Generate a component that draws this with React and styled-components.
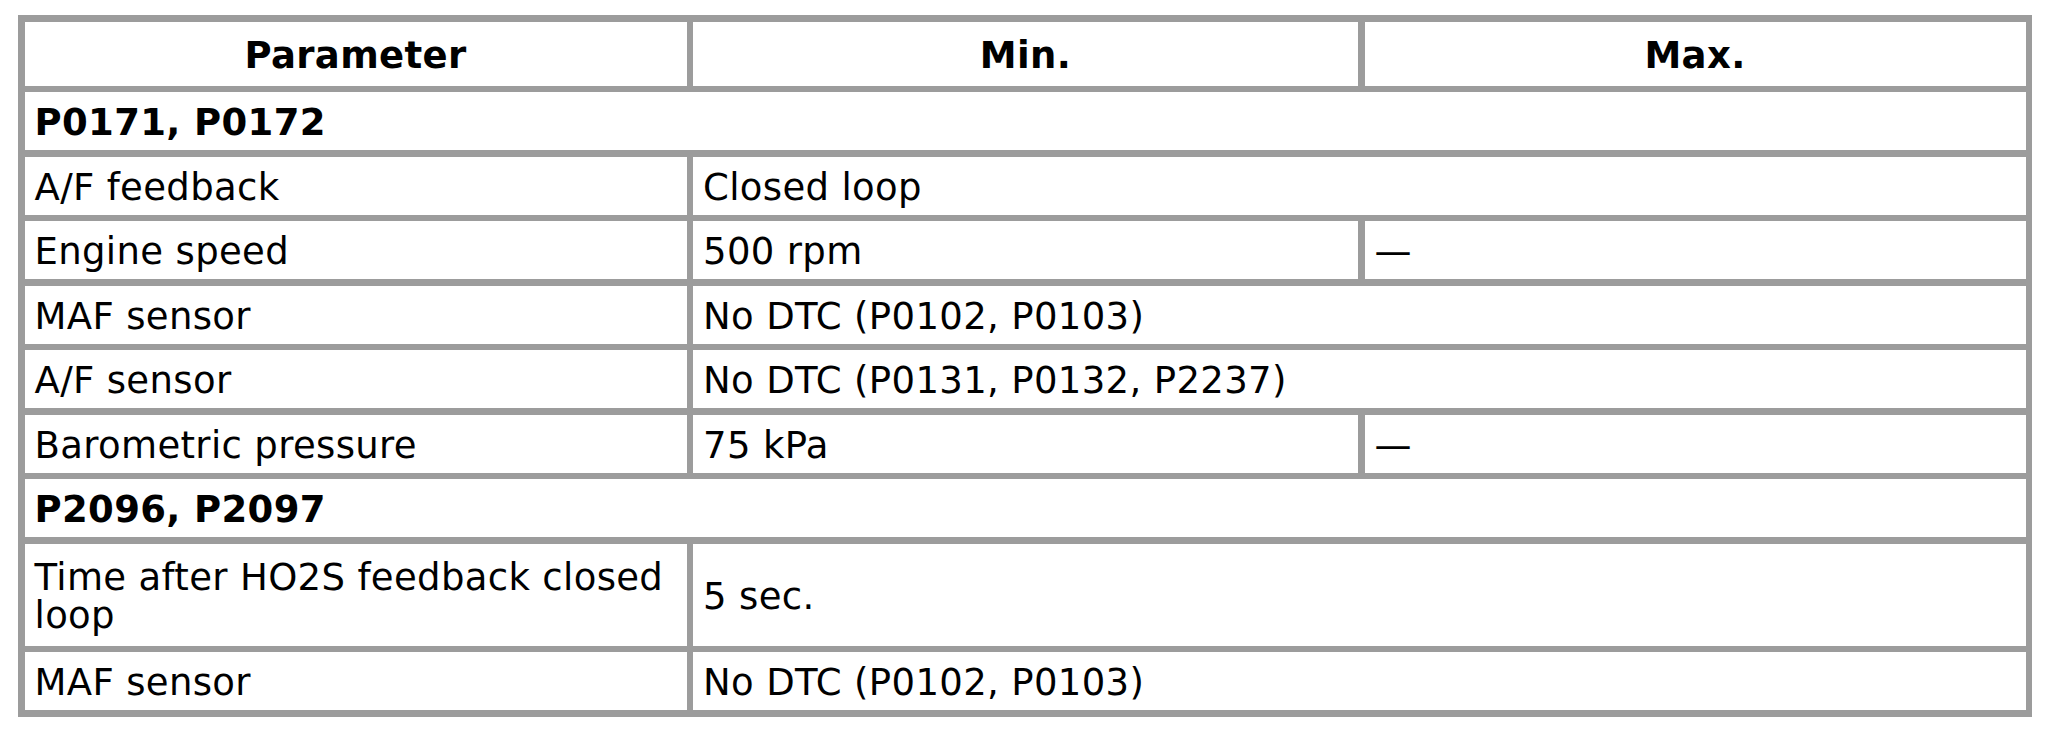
import React from "react";
import styled, { createGlobalStyle } from "styled-components";

const Global = createGlobalStyle`
  html, body { margin: 0; padding: 0; background: #ffffff; }
  body { font-family: "DejaVu Sans", Verdana, sans-serif; color: #000; }
`;

const Page = styled.div`
  width: 2048px;
  box-sizing: border-box;
  padding: 15px 0 0 18px;
`;

const Table = styled.div`
  display: grid;
  width: 2014px;
  box-sizing: border-box;
  grid-template-columns: 662px 665px 1fr;
  grid-template-rows: 64px repeat(7, 58px) 102px 58px;
  gap: 6.5px 6.5px;
  padding: 6.5px;
  background: #9c9c9c;
`;

const Cell = styled.div`
  grid-column: span ${(p) => p.$span || 1};
  background: #ffffff;
  display: flex;
  align-items: center;
  justify-content: ${(p) => (p.$head ? "center" : "flex-start")};
  padding: 4px 10px 0 10px;
  font-size: 37px;
  line-height: 38px;
  letter-spacing: 0.35px;
  font-weight: ${(p) => (p.$bold ? 700 : 400)};
`;

const rows = [
  { type: "section", label: "P0171, P0172" },
  { type: "span", label: "A/F feedback", min: "Closed loop" },
  { type: "pair", label: "Engine speed", min: "500 rpm", max: "\u2014" },
  { type: "span", label: "MAF sensor", min: "No DTC (P0102, P0103)" },
  { type: "span", label: "A/F sensor", min: "No DTC (P0131, P0132, P2237)" },
  { type: "pair", label: "Barometric pressure", min: "75 kPa", max: "\u2014" },
  { type: "section", label: "P2096, P2097" },
  { type: "span", label: "Time after HO2S feedback closed loop", min: "5 sec." },
  { type: "span", label: "MAF sensor", min: "No DTC (P0102, P0103)" },
];

export default function App() {
  return (
    <>
      <Global />
      <Page>
        <Table>
          <Cell $head $bold>Parameter</Cell>
          <Cell $head $bold>Min.</Cell>
          <Cell $head $bold>Max.</Cell>
          {rows.map((r, i) => {
            if (r.type === "section") {
              return (
                <Cell key={i} $span={3} $bold>
                  {r.label}
                </Cell>
              );
            }
            if (r.type === "span") {
              return (
                <React.Fragment key={i}>
                  <Cell>{r.label}</Cell>
                  <Cell $span={2}>{r.min}</Cell>
                </React.Fragment>
              );
            }
            return (
              <React.Fragment key={i}>
                <Cell>{r.label}</Cell>
                <Cell>{r.min}</Cell>
                <Cell>{r.max}</Cell>
              </React.Fragment>
            );
          })}
        </Table>
      </Page>
    </>
  );
}
